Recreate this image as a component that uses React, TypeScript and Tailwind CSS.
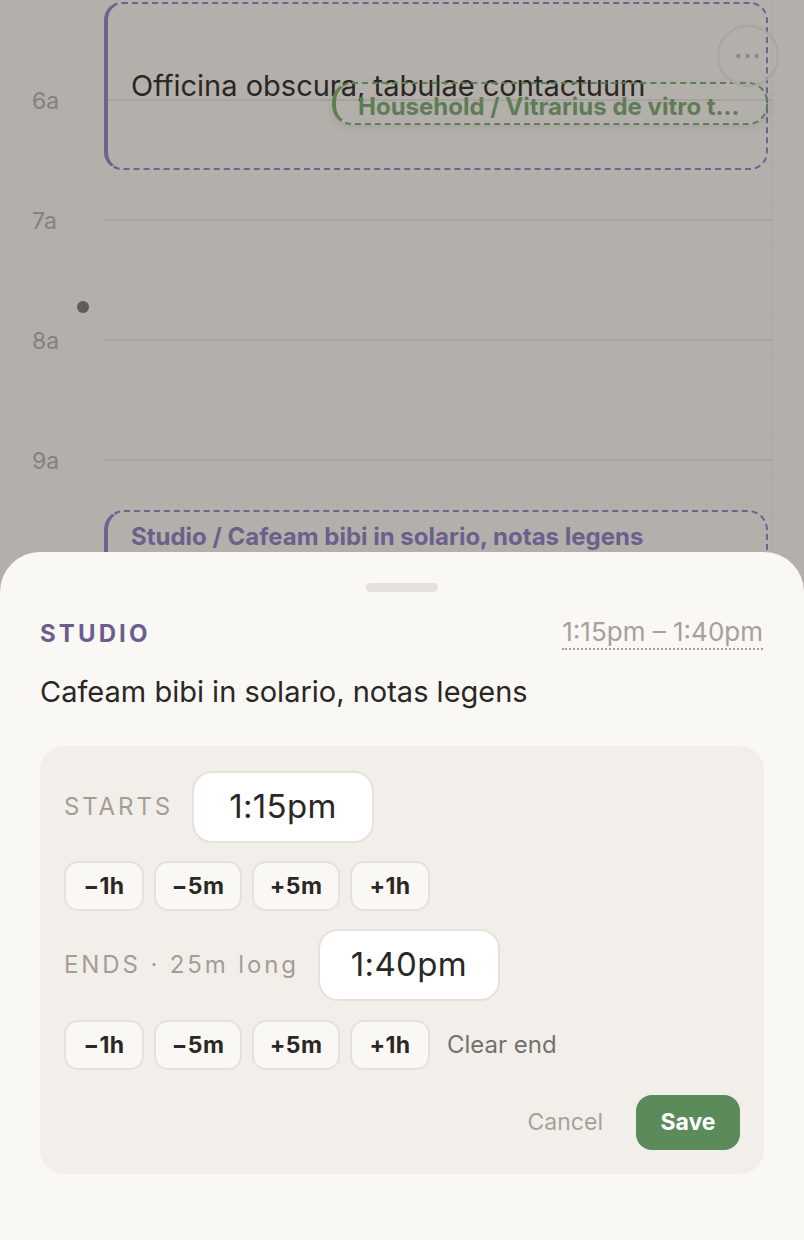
import React from 'react';

const hours = ['6a', '7a', '8a', '9a', '10a'];

const StepButtons = () => (
  <>
    {['−1h', '−5m', '+5m', '+1h'].map((label, i) => (
      <button
        key={label}
        className={`h-[50px] ${i === 0 || i === 3 ? 'w-[80px]' : 'w-[88px]'} rounded-[14px] border-2 border-[#e6e1db] bg-[#f9f8f5] text-[23px] font-bold tracking-[0.02em] text-[#2a2724]`}
      >
        {label}
      </button>
    ))}
  </>
);

const TimeBox = ({ value }: { value: string }) => (
  <div className="flex h-[72px] w-[182px] items-center justify-center rounded-[20px] border-2 border-[#e6e1db] bg-white text-[33px] tracking-[0.01em] text-[#2a2724]">
    {value}
  </div>
);

const App = () => {
  return (
    <div
      className="relative h-[1240px] w-[804px] overflow-hidden bg-[#b3afab]"
      style={{ fontFamily: 'Inter, "Noto Sans", sans-serif' }}
    >
      {/* timeline */}
      <div className="pt-[40px]">
        {hours.map((h) => (
          <div key={h} className="flex h-[120px] items-center pr-8">
            <div className="w-[104px] pl-8 pt-[2px] text-[23px] text-[#85817d]">{h}</div>
            <div className="h-[2px] flex-1 bg-[#a6a29e]" />
          </div>
        ))}
      </div>
      <div className="absolute left-[771px] top-0 h-[550px] border-l-2 border-dashed border-[#a8a4a0] opacity-50" />
      <div className="absolute left-[77px] top-[301px] h-3 w-3 rounded-full bg-[#5f5b57]" />

      {/* events */}
      <div className="absolute left-[104px] top-[2px] h-[168px] w-[664px] rounded-[18px] border-2 border-l-4 border-dashed border-[#6d6390] pl-[23px] pt-[65px] [border-left-style:solid]">
        <div className="text-[29px] leading-[34px] text-[#2a2724]">Officina obscura, tabulae contactuum</div>
      </div>
      <div className="absolute left-[332px] top-[82px] flex h-[43px] w-[436px] items-start rounded-[20px] border-2 border-l-4 border-dashed border-[#5f7e56] pl-[22px] pr-4 pt-[9px] shadow-[0_3px_8px_rgba(0,0,0,0.08)] [border-left-style:solid]">
        <div className="whitespace-nowrap text-[24px] font-bold leading-[28px] text-[#5e7d55]">Household / Vitrarius de vitro t…</div>
      </div>
      <div className="absolute left-[717px] top-[25px] flex h-[62px] w-[62px] items-center justify-center rounded-full border-2 border-[#a8a4a0] text-[24px] font-bold tracking-[0.05em] text-[#8c8884]">
        ···
      </div>
      <div className="absolute left-[104px] top-[510px] flex h-[60px] w-[664px] items-start rounded-[20px] border-2 border-l-4 border-dashed border-[#6d6390] pl-[23px] pt-[10px] [border-left-style:solid]">
        <div className="text-[24px] font-bold leading-[30px] text-[#6b5f8c]">Studio / Cafeam bibi in solario, notas legens</div>
      </div>

      {/* sheet */}
      <div className="absolute bottom-0 left-0 top-[552px] w-full rounded-t-[40px] bg-[#f9f8f5] px-10 pt-[31px]">
        <div className="mx-auto h-[9px] w-[72px] rounded-full bg-[#e6e1dc]" />
        <div className="mt-[25px] flex items-center justify-between">
          <div className="text-[24px] font-bold leading-[30px] tracking-[0.13em] text-[#6b5d8e]">STUDIO</div>
          <div className="mr-[1px] border-b-2 border-dotted border-[#a8a099] pb-[1px] text-[26px] leading-[30px] text-[#a8a099]">
            1:15pm – 1:40pm
          </div>
        </div>
        <div className="mt-[24px] text-[29px] leading-[36px] text-[#2a2724]">Cafeam bibi in solario, notas legens</div>

        <div className="mt-[36px] rounded-[24px] bg-[#f2efeb] px-6 pb-6 pt-[25px]">
          <div className="flex items-center gap-[19px]">
            <span className="text-[24px] tracking-[0.12em] text-[#a59d95]">STARTS</span>
            <TimeBox value="1:15pm" />
          </div>
          <div className="mt-[18px] flex items-center gap-[10px]">
            <StepButtons />
          </div>
          <div className="mt-[18px] flex items-center gap-[19px]">
            <span className="text-[24px] tracking-[0.12em] text-[#a59d95]">ENDS · 25m long</span>
            <TimeBox value="1:40pm" />
          </div>
          <div className="mt-[19px] flex items-center gap-[10px]">
            <StepButtons />
            <span className="ml-[7px] text-[24px] text-[#77716b]">Clear end</span>
          </div>
          <div className="mt-[25px] flex items-center justify-end gap-[33px]">
            <span className="text-[23px] text-[#a8a099]">Cancel</span>
            <button className="h-[55px] w-[104px] rounded-[16px] bg-[#5b8b5a] text-[23px] font-bold text-white">Save</button>
          </div>
        </div>
      </div>
    </div>
  );
};

export default App;
